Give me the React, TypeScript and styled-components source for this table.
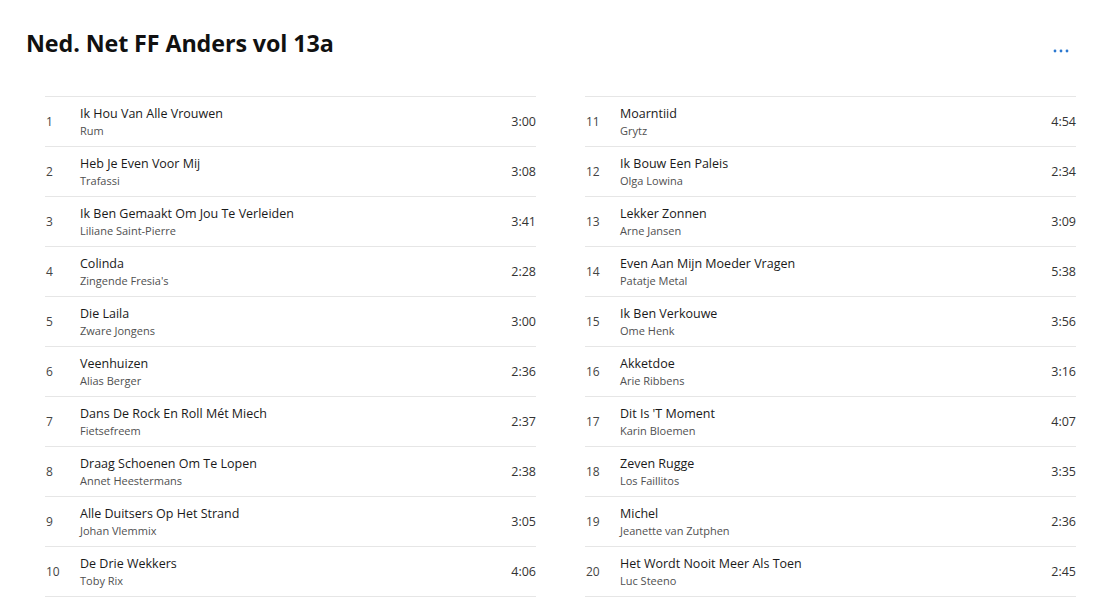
import React from "react";
import styled, { createGlobalStyle } from "styled-components";

interface Track {
  title: string;
  artist: string;
  duration: string;
}

const TRACKS: Track[] = [
  { title: "Ik Hou Van Alle Vrouwen", artist: "Rum", duration: "3:00" },
  { title: "Heb Je Even Voor Mij", artist: "Trafassi", duration: "3:08" },
  { title: "Ik Ben Gemaakt Om Jou Te Verleiden", artist: "Liliane Saint-Pierre", duration: "3:41" },
  { title: "Colinda", artist: "Zingende Fresia's", duration: "2:28" },
  { title: "Die Laila", artist: "Zware Jongens", duration: "3:00" },
  { title: "Veenhuizen", artist: "Alias Berger", duration: "2:36" },
  { title: "Dans De Rock En Roll Mét Miech", artist: "Fietsefreem", duration: "2:37" },
  { title: "Draag Schoenen Om Te Lopen", artist: "Annet Heestermans", duration: "2:38" },
  { title: "Alle Duitsers Op Het Strand", artist: "Johan Vlemmix", duration: "3:05" },
  { title: "De Drie Wekkers", artist: "Toby Rix", duration: "4:06" },
  { title: "Moarntiid", artist: "Grytz", duration: "4:54" },
  { title: "Ik Bouw Een Paleis", artist: "Olga Lowina", duration: "2:34" },
  { title: "Lekker Zonnen", artist: "Arne Jansen", duration: "3:09" },
  { title: "Even Aan Mijn Moeder Vragen", artist: "Patatje Metal", duration: "5:38" },
  { title: "Ik Ben Verkouwe", artist: "Ome Henk", duration: "3:56" },
  { title: "Akketdoe", artist: "Arie Ribbens", duration: "3:16" },
  { title: "Dit Is 'T Moment", artist: "Karin Bloemen", duration: "4:07" },
  { title: "Zeven Rugge", artist: "Los Faillitos", duration: "3:35" },
  { title: "Michel", artist: "Jeanette van Zutphen", duration: "2:36" },
  { title: "Het Wordt Nooit Meer Als Toen", artist: "Luc Steeno", duration: "2:45" },
];

const GlobalStyle = createGlobalStyle`
  body {
    margin: 0;
    background: #ffffff;
    font-family: "Open Sans", "Noto Sans", sans-serif;
    color: #1a1a1a;
  }
`;

const App: React.FC = () => {
  const columns = [TRACKS.slice(0, 10), TRACKS.slice(10)];
  return (
    <Page>
      <GlobalStyle />
      <Header>
        <Title>Ned. Net FF Anders vol 13a</Title>
        <MoreButton aria-label="Meer">
          <svg width="16" height="4" viewBox="0 0 16 4">
            <circle cx="2" cy="2" r="1.4" />
            <circle cx="8" cy="2" r="1.4" />
            <circle cx="14" cy="2" r="1.4" />
          </svg>
        </MoreButton>
      </Header>
      <Columns>
        {columns.map((col, ci) => (
          <List key={ci}>
            {col.map((t, i) => (
              <Row key={t.title}>
                <Num>{ci * 10 + i + 1}</Num>
                <Info>
                  <SongTitle>{t.title}</SongTitle>
                  <Artist>{t.artist}</Artist>
                </Info>
                <Duration>{t.duration}</Duration>
              </Row>
            ))}
          </List>
        ))}
      </Columns>
    </Page>
  );
};

const Page = styled.div`
  width: 1116px;
  height: 603px;
  box-sizing: border-box;
  padding: 26px 47px 0 26px;
  overflow: hidden;
`;

const Header = styled.div`
  display: flex;
  justify-content: space-between;
  align-items: center;
  height: 34px;
`;

const Title = styled.h1`
  margin: 0;
  font-size: 23.3px;
  font-weight: 700;
  letter-spacing: -0.1px;
  color: #111;
`;

const MoreButton = styled.button`
  border: 0;
  background: none;
  padding: 0;
  margin-top: 15px;
  display: flex;
  fill: #2b78d0;
  cursor: pointer;
`;

const Columns = styled.div`
  display: grid;
  grid-template-columns: 491px 491px;
  column-gap: 49px;
  margin-top: 36px;
  padding-left: 19px;
`;

const List = styled.div`
  border-top: 1px solid #e6e6e6;
`;

const Row = styled.div`
  display: flex;
  align-items: center;
  height: 49px;
  border-bottom: 1px solid #e6e6e6;
`;

const Num = styled.span`
  width: 35px;
  padding-left: 1px;
  box-sizing: border-box;
  font-size: 12px;
  color: #444;
`;

const Info = styled.div`
  flex: 1;
  display: flex;
  flex-direction: column;
  gap: 1px;
  margin-top: 1px;
`;

const SongTitle = styled.span`
  font-size: 12.5px;
  line-height: 17px;
  color: #1a1a1a;
`;

const Artist = styled.span`
  font-size: 11px;
  line-height: 16px;
  color: #505050;
`;

const Duration = styled.span`
  font-size: 12.5px;
  color: #333;
`;

export default App;
